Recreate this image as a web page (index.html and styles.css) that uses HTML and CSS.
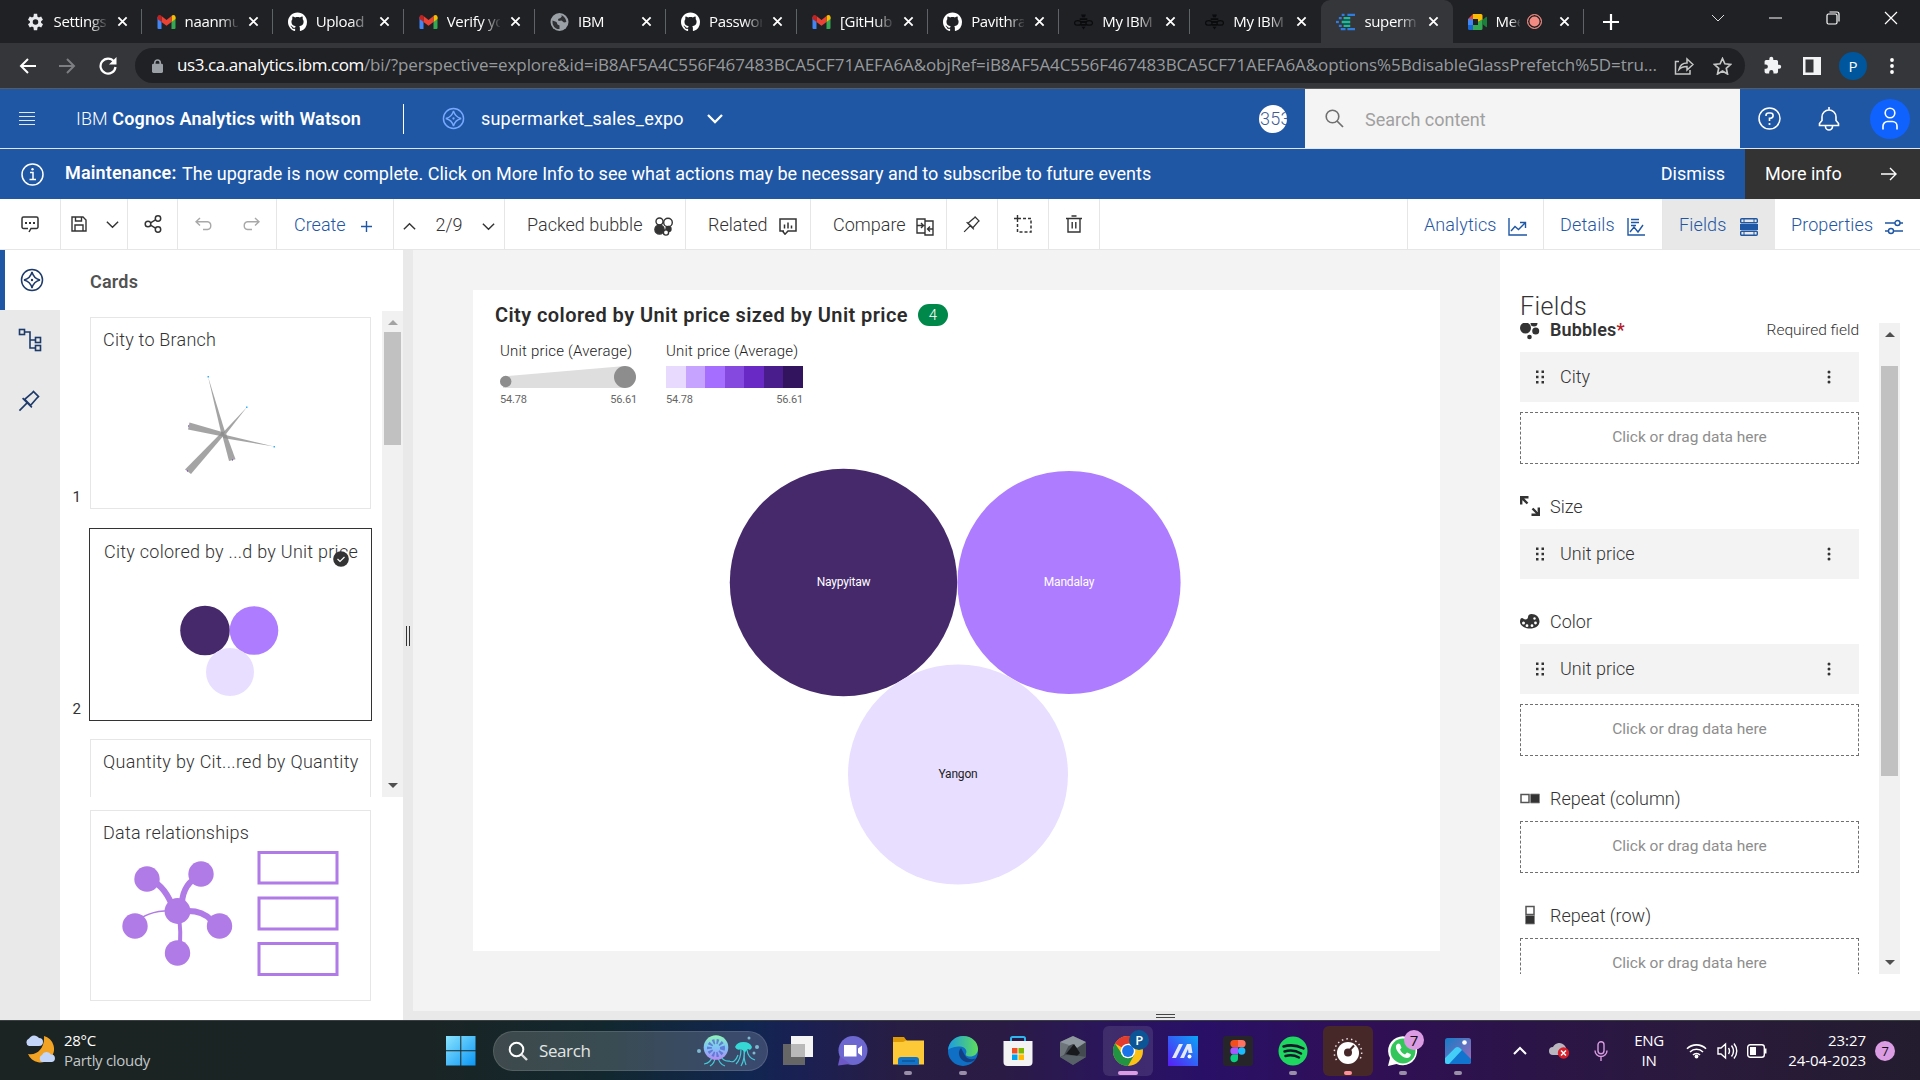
FILE: index.html
```html
<!DOCTYPE html>
<html lang="en">
<head>
<meta charset="utf-8">
<title>supermarket_sales_expo</title>
<link rel="stylesheet" href="styles.css">
</head>
<body>
<svg class="sprite" aria-hidden="true">
  <symbol id="gmail" viewBox="0 0 18 14"><path d="M0 1.800V13a1 1 0 0 0 1 1h3V6.500z" fill="#4285f4"/><path d="M18 1.800V13a1 1 0 0 1-1 1h-3V6.500z" fill="#34a853"/><path d="M14 1v6l4-3V2.200C18 .2 15.600-.7 14 1z" fill="#fbbc04"/><path d="M4 7V1l5 4 5-4v6l-5 3.800z" fill="#ea4335"/><path d="M0 2.200V4l4 3V1C2.400-.7 0 .2 0 2.200z" fill="#c5221f"/></symbol>
  <symbol id="github" viewBox="0 0 16 16"><path fill="#fff" d="M8 0C3.580 0 0 3.580 0 8c0 3.540 2.290 6.530 5.470 7.590.4.070.55-.17.55-.38 0-.19-.01-.82-.01-1.490-2.010.37-2.530-.49-2.690-.94-.09-.23-.48-.94-.82-1.130-.28-.15-.68-.52-.01-.53.63-.01 1.080.58 1.230.82.72 1.210 1.870.87 2.330.66.07-.52.28-.87.51-1.070-1.780-.2-3.640-.89-3.640-3.950 0-.87.31-1.590.82-2.150-.08-.2-.36-1.020.08-2.120 0 0 .67-.21 2.200.82.64-.18 1.320-.27 2-.27s1.360.09 2 .27c1.530-1.040 2.200-.82 2.200-.82.44 1.100.16 1.920.08 2.120.51.56.82 1.270.82 2.150 0 3.070-1.870 3.750-3.650 3.950.29.25.54.73.54 1.480 0 1.070-.01 1.930-.01 2.200 0 .21.15.46.55.38A8.010 8.010 0 0 0 16 8c0-4.420-3.580-8-8-8z"/></symbol>
  <symbol id="bee" viewBox="0 0 20 18"><g fill="none" stroke="#0a0b0c" stroke-width="1.300"><ellipse cx="4" cy="10" rx="3.500" ry="2.400"/><ellipse cx="16" cy="10" rx="3.500" ry="2.400"/></g><path d="M6 5h8v2H6zM7 8h6v2H7zM7 11h6v2H7zM8 14h4l-2 3zM7.500 1h5l-1 3h-3z" fill="#0a0b0c"/></symbol>
  <symbol id="x" viewBox="0 0 12 12"><path d="M1.500 1.500l9 9M10.500 1.500l-9 9" stroke="#fff" stroke-width="2" fill="none"/></symbol>
  <symbol id="compass" viewBox="0 0 24 24"><g fill="none" stroke="currentColor" stroke-width="1.500"><circle cx="12" cy="12" r="10.500"/><path d="M12 4c1 4 4 7 8 8-4 1-7 4-8 8-1-4-4-7-8-8 4-1 7-4 8-8z"/></g><circle cx="12" cy="12" r="1.200" fill="currentColor"/></symbol>
  <symbol id="pin" viewBox="0 0 24 24"><path d="M15.500 2l6.500 6.500M16 2.800L14.800 4 7 10.800 13.200 17 20 9.200l1.200-1.200M4.800 9.500l9.700 9.700M9.500 14.500L1.500 22.500" fill="none" stroke="currentColor" stroke-width="1.700"/></symbol>
  <symbol id="down" viewBox="0 0 16 16"><path d="M2 5l6 6 6-6" fill="none" stroke="currentColor" stroke-width="1.500"/></symbol>
  <symbol id="grip" viewBox="0 0 9 14"><path d="M0 .5h2.500V3H0zM5.500 .5H8V3H5.500zM0 5.800h2.500v2.500H0zM5.500 5.800H8v2.500H5.500zM0 11h2.500v2.500H0zM5.500 11H8v2.500H5.500z" fill="#333"/></symbol>
  <symbol id="kebab" viewBox="0 0 4 14"><circle cx="2" cy="2" r="1.500"/><circle cx="2" cy="7" r="1.500"/><circle cx="2" cy="12" r="1.500"/></symbol>
</svg>

<div class="tabs">
  <div class="tab"><svg width="17" height="18" viewBox="0 0 24 24"><path fill="#e8eaed" d="M19.400 13c.1-.3.100-.7.100-1s0-.7-.1-1l2.500-2-2.400-4.200-3 1.200c-.6-.5-1.200-.8-1.900-1.100L14.200 1H9.800l-.5 3.900c-.7.3-1.300.6-1.900 1.100l-3-1.200L2 9l2.600 2c-.1.3-.1.700-.1 1s0 .7.1 1L2 15l2.400 4.200 3-1.200c.6.500 1.200.8 1.900 1.100l.5 3.900h4.400l.5-3.900c.7-.3 1.300-.6 1.900-1.100l3 1.200L22 15zM12 15.700a3.700 3.700 0 1 1 0-7.400 3.700 3.700 0 0 1 0 7.400z"/></svg><span>Settings</span><svg width="11" height="11"><use href="#x"/></svg></div>
  <div class="tab"><svg width="18" height="14"><use href="#gmail"/></svg><span>naanmu</span><svg width="11" height="11"><use href="#x"/></svg></div>
  <div class="tab"><svg width="20" height="20"><use href="#github"/></svg><span>Upload</span><svg width="11" height="11"><use href="#x"/></svg></div>
  <div class="tab"><svg width="18" height="14"><use href="#gmail"/></svg><span>Verify yo</span><svg width="11" height="11"><use href="#x"/></svg></div>
  <div class="tab"><svg width="18" height="18" viewBox="0 0 18 18"><circle cx="9" cy="9" r="9" fill="#9aa0a6"/><path d="M2 7.500L6 9l1 2.500 2 1v3.500C5 16.500 2 13 2 9zM8 2c2 0 3 .5 3.500 1L10 5 7.500 6 8 8l3-.5 2.500 2 2.300-.5c0-3.500-3-7-6.800-7z" fill="#303134"/></svg><span>IBM</span><svg width="11" height="11"><use href="#x"/></svg></div>
  <div class="tab"><svg width="20" height="20"><use href="#github"/></svg><span>Passwor</span><svg width="11" height="11"><use href="#x"/></svg></div>
  <div class="tab"><svg width="18" height="14"><use href="#gmail"/></svg><span>[GitHub</span><svg width="11" height="11"><use href="#x"/></svg></div>
  <div class="tab"><svg width="20" height="20"><use href="#github"/></svg><span>Pavithra</span><svg width="11" height="11"><use href="#x"/></svg></div>
  <div class="tab"><svg width="20" height="18"><use href="#bee"/></svg><span>My IBM</span><svg width="11" height="11"><use href="#x"/></svg></div>
  <div class="tab before-active"><svg width="20" height="18"><use href="#bee"/></svg><span>My IBM</span><svg width="11" height="11"><use href="#x"/></svg></div>
  <div class="tab active"><svg width="20" height="18" viewBox="0 0 20 18"><path d="M6 1.500h3M12 1.500h8M5 16.500h5M12 16.500h8M3 5h3M3 13h3" stroke="#2f7de1" stroke-width="2.400"/><path d="M8 5h7M6 9h9M8 13h7" stroke="#12c0a0" stroke-width="2.400"/><path d="M0 9h3" stroke="#2f7de1" stroke-width="2.400"/></svg><span>superm</span><svg width="11" height="11"><use href="#x"/></svg></div>
  <div class="tab"><svg width="19" height="16" viewBox="0 0 19 16"><path d="M0 5l5-5v5z" fill="#ea4335"/><path d="M5 0h8a1.500 1.500 0 0 1 1.500 1.500V6L10 8V5H5z" fill="#fbbc04"/><path d="M0 5h5v6H0z" fill="#4285f4"/><path d="M0 11h5v5H1.500A1.500 1.500 0 0 1 0 14.500z" fill="#1967d2"/><path d="M5 11h5V8l4.500-3v9.500A1.500 1.500 0 0 1 13 16H5z" fill="#34a853"/><path d="M14.500 6L18 3c.6-.4 1 0 1 .5v9c0 .5-.5.9-1 .5l-3.500-3z" fill="#188038"/></svg><span class="short">Mee</span><i class="rec"></i><svg width="11" height="11"><use href="#x"/></svg></div>
  <svg class="newtab" width="16" height="16" viewBox="0 0 16 16"><path d="M8 0v16M0 8h16" stroke="#fff" stroke-width="2.200"/></svg>
  <div class="winctl">
    <svg width="14" height="8" viewBox="0 0 14 8"><path d="M1 1l6 6 6-6" fill="none" stroke="#ddd"/></svg>
    <svg width="13" height="2" viewBox="0 0 13 2"><path d="M0 1h13" stroke="#fff"/></svg>
    <svg width="14" height="14" viewBox="0 0 14 14"><g fill="none" stroke="#fff" stroke-width="1.200"><rect x="1" y="3" width="10" height="10" rx="1.500"/><path d="M3.500 1H11a2 2 0 0 1 2 2v7.500"/></g></svg>
    <svg width="14" height="14" viewBox="0 0 14 14"><path d="M1 1l12 12M13 1L1 13" stroke="#fff" stroke-width="1.200"/></svg>
  </div>
</div>

<div class="navbar">
  <svg class="nav" width="17" height="16" viewBox="0 0 17 16"><path d="M17 8H2M9 1L2 8l7 7" fill="none" stroke="#fff" stroke-width="2"/></svg>
  <svg class="nav" width="17" height="16" viewBox="0 0 17 16"><path d="M0 8h15M8 1l7 7-7 7" fill="none" stroke="#7d7e81" stroke-width="2"/></svg>
  <svg class="nav" width="18" height="18" viewBox="0 0 18 18"><path d="M15 4.500A7.500 7.500 0 1 0 16.500 10" fill="none" stroke="#fff" stroke-width="2.200"/><path d="M17.500 0v7.500H10z" fill="#fff"/></svg>
  <div class="omnibox">
    <svg width="11" height="14" viewBox="0 0 12 15"><rect y="5" width="12" height="10" rx="1.500" fill="#9aa0a6"/><path d="M3 6V4a3 3 0 0 1 6 0v2" fill="none" stroke="#9aa0a6" stroke-width="1.800"/></svg>
    <p class="url"><b>us3.ca.analytics.ibm.com</b>/bi/?perspective=explore&amp;id=iB8AF5A4C556F467483BCA5CF71AEFA6A&amp;objRef=iB8AF5A4C556F467483BCA5CF71AEFA6A&amp;options%5BdisableGlassPrefetch%5D=tru…</p>
    <svg width="20" height="18" viewBox="0 0 20 18"><path d="M5 4.500H1.500V17H16v-4M5 12.500C6 8 9 6 13 6V2l6 5.500-6 5.500V9.500c-4 0-6 .8-8 3z" fill="none" stroke="#c4c7c5" stroke-width="1.500"/></svg>
    <svg class="star" width="19" height="18" viewBox="0 0 19 18"><path d="M9.500 1.500l2.400 5.300 5.700.6-4.300 3.900 1.200 5.700-5-3-5 3 1.200-5.700L1.400 7.400l5.700-.6z" fill="none" stroke="#c4c7c5" stroke-width="1.700"/></svg>
  </div>
  <svg class="puzzle" width="19" height="19" viewBox="0 0 24 24"><path fill="#f1f3f4" d="M20.500 11H19V7a2 2 0 0 0-2-2h-4V3.500a2.500 2.500 0 0 0-5 0V5H4a2 2 0 0 0-2 2v3.800h1.500a2.700 2.700 0 0 1 0 5.400H2V20c0 1.100.9 2 2 2h3.800v-1.500a2.700 2.700 0 0 1 5.400 0V22H17a2 2 0 0 0 2-2v-4h1.500a2.500 2.500 0 0 0 0-5z"/></svg>
  <svg class="side" width="18" height="18" viewBox="0 0 18 18"><path fill="#f1f3f4" fill-rule="evenodd" d="M0 0h18v18H0zM2.500 2.500v13h8v-13z"/></svg>
  <span class="profile">P</span>
  <svg class="dots" width="4" height="16" viewBox="0 0 4 16"><g fill="#fff"><circle cx="2" cy="2" r="1.900"/><circle cx="2" cy="8" r="1.900"/><circle cx="2" cy="14" r="1.900"/></g></svg>
</div>

<header class="appbar">
  <svg class="burger" width="16" height="14" viewBox="0 0 16 14"><path d="M0 .5h16M0 4.500h16M0 8.500h16M0 12.500h16" stroke="#dfe8f5" stroke-width="1"/></svg>
  <div class="brand">IBM <b>Cognos Analytics with Watson</b></div>
  <i class="rule"></i>
  <svg class="doc" width="23" height="23"><use href="#compass"/></svg>
  <span class="docname">supermarket_sales_expo</span>
  <svg class="docdown" width="18" height="12" viewBox="0 0 18 12"><path d="M2 2l7 7 7-7" fill="none" stroke="#fff" stroke-width="2.300"/></svg>
  <span class="count">353</span>
  <div class="search"><svg width="19" height="19" viewBox="0 0 19 19"><circle cx="7.500" cy="7.500" r="6.300" fill="none" stroke="#6f6f6f" stroke-width="1.600"/><path d="M12 12l6 6" stroke="#6f6f6f" stroke-width="1.700"/></svg><span>Search content</span></div>
  <div class="userbar">
    <svg width="23" height="23" viewBox="0 0 23 23"><circle cx="11.500" cy="11.500" r="10.500" fill="none" stroke="#fff" stroke-width="1.500"/><path d="M8 9V8.500A2.500 2.500 0 0 1 10.500 6h2a2.600 2.600 0 0 1 0 5.200h-1V14" fill="none" stroke="#fff" stroke-width="1.600"/><circle cx="11.500" cy="17" r="1.100" fill="#fff"/></svg>
    <svg width="22" height="24" viewBox="0 0 22 24"><path d="M11 0v3M1.500 18.500v-2L4 13.500V10a7 7 0 0 1 14 0v3.500l2.500 3v2zM7.500 19v.5a3.500 3.500 0 0 0 7 0V19" fill="none" stroke="#fff" stroke-width="1.600"/></svg>
    <span class="avatar"><svg width="18" height="23" viewBox="0 0 18 23"><circle cx="9" cy="6" r="4.800" fill="none" stroke="#fff" stroke-width="1.600"/><path d="M2 22.500V19a4.500 4.500 0 0 1 4.500-4.500h5A4.500 4.500 0 0 1 16 19v3.500" fill="none" stroke="#fff" stroke-width="1.600"/></svg></span>
  </div>
</header>

<div class="banner">
  <svg width="23" height="23" viewBox="0 0 23 23"><circle cx="11.500" cy="11.500" r="10.500" fill="none" stroke="#fff" stroke-width="1.500"/><path d="M9 9.500h3V16M8.500 16.500h6.500" fill="none" stroke="#fff" stroke-width="1.500"/><circle cx="11.500" cy="6.200" r="1.200" fill="#fff"/></svg>
  <b>Maintenance:</b><span class="msg">The upgrade is now complete. Click on More Info to see what actions may be necessary and to subscribe to future events</span>
  <span class="dismiss">Dismiss</span>
  <div class="more">More info<svg width="16" height="14" viewBox="0 0 16 14"><path d="M0 7h14.500M9 1l6 6-6 6" fill="none" stroke="#fff" stroke-width="1.400"/></svg></div>
</div>

<div class="toolbar">
  <div class="cell w60"><svg width="18" height="17" viewBox="0 0 18 17"><g fill="none" stroke="#333" stroke-width="1.500"><path d="M8 16l2-3.500h5.500A1.500 1.500 0 0 0 17 11V2.500A1.500 1.500 0 0 0 15.500 1h-13A1.500 1.500 0 0 0 1 2.500V11a1.500 1.500 0 0 0 1.500 1.500H7"/></g><path d="M4 6h2v2H4zM8 6h2v2H8zM12 6h2v2h-2z" fill="#333"/></svg></div>
  <div class="cell save"><svg width="16" height="16" viewBox="0 0 16 16"><g fill="none" stroke="#333" stroke-width="1.400"><path d="M1 1h11l3 3v11H1zM4.500 1v4h6V1M4 15V9h8v6"/></g></svg><svg width="15" height="15"><use href="#down"/></svg></div>
  <div class="cell w50"><svg width="18" height="18" viewBox="0 0 18 18"><g fill="none" stroke="#333" stroke-width="1.500"><circle cx="4" cy="9" r="2.800"/><circle cx="14" cy="3.500" r="2.700"/><circle cx="14" cy="14.500" r="2.700"/><path d="M6.500 7.800l5-3M6.500 10.200l5 3"/></g></svg></div>
  <div class="cell undo"><svg width="17" height="14" viewBox="0 0 17 14"><path d="M5 1L1 4.800l4 3.800M1 4.800h11.500a3.900 3.900 0 0 1 0 7.700H8" fill="none" stroke="#a8a8a8" stroke-width="1.400"/></svg><svg width="17" height="14" viewBox="0 0 17 14"><path d="M12 1l4 3.800-4 3.800M16 4.800H4.500a3.900 3.900 0 0 0 0 7.700H9" fill="none" stroke="#a8a8a8" stroke-width="1.400"/></svg></div>
  <div class="cell create blue"><span>Create</span><svg width="11" height="11" viewBox="0 0 11 11"><path d="M5.500 0v11M0 5.500h11" stroke="currentColor" stroke-width="1.400"/></svg></div>
  <div class="cell pager"><svg class="up" width="15" height="15"><use href="#down"/></svg><span>2/9</span><svg width="15" height="15"><use href="#down"/></svg></div>
  <div class="cell packed"><span>Packed bubble</span><svg width="19" height="19" viewBox="0 0 19 19"><g stroke="#333" stroke-width="1.400" fill="#fff"><circle cx="14" cy="5.500" r="4.300"/><circle cx="5.500" cy="4.500" r="3.500"/><circle cx="5.500" cy="12.500" r="4.600" fill="#333"/><circle cx="14.500" cy="12" r="2.500" fill="#333"/><circle cx="12" cy="15.500" r="2.600"/></g></svg></div>
  <div class="cell related"><span>Related</span><svg width="18" height="17" viewBox="0 0 18 17"><path d="M5 13H1V1h16v12H9l-3 3.200L3.500 13M5.500 10.500v-4M9 10.500v-6M12.500 10.500v-3" fill="none" stroke="#333" stroke-width="1.500"/></svg></div>
  <div class="cell compare"><span>Compare</span><svg width="18" height="18" viewBox="0 0 18 18"><path d="M9 3V1H1v14h8M9 3h8v14H9zM1 7.500h6M5 5l2.500 2.500L5 10M17 11h-5.500M14 8.500L11.500 11l2.500 2.500" fill="none" stroke="#333" stroke-width="1.400"/></svg></div>
  <div class="cell w51"><svg width="18" height="18" color="#333"><use href="#pin"/></svg></div>
  <div class="cell w51"><svg width="18" height="18" viewBox="0 0 18 18"><path d="M3.500 0v7M0 3.500h7" stroke="#333" stroke-width="1.400"/><path d="M9 3.500h8V17H3.500V9" fill="none" stroke="#333" stroke-width="1.500" stroke-dasharray="3 2"/></svg></div>
  <div class="cell w51"><svg width="16" height="18" viewBox="0 0 16 18"><path d="M0 3.500h16M2 4v13h12V4M5.500 1h5M6.200 7v6.500M9.800 7v6.500" fill="none" stroke="#333" stroke-width="1.400"/></svg></div>
  <div class="right">
    <div class="cell analytics blue"><span>Analytics</span><svg width="19" height="18" viewBox="0 0 19 18"><path d="M1 0v17h18M3 13l4-4.500 3.500 3L17 5M12 4.500h5.500V10" fill="none" stroke="currentColor" stroke-width="1.400"/></svg></div>
    <div class="cell details blue"><span>Details</span><svg width="18" height="18" viewBox="0 0 18 18"><path d="M1 0v17h17M4 1.500h8M4 4.500h8M4 7.500h5M3 14l4-5 4 5 5-7" fill="none" stroke="currentColor" stroke-width="1.400"/></svg></div>
    <div class="cell fields blue"><span>Fields</span><svg width="18" height="18" viewBox="0 0 18 18"><path d="M0 6h18v6H0z" fill="currentColor"/><rect x=".7" y=".7" width="16.600" height="4" rx="1" fill="none" stroke="currentColor" stroke-width="1.400"/><rect x=".7" y="13.300" width="16.600" height="4" rx="1" fill="none" stroke="currentColor" stroke-width="1.400"/><path d="M4 1v4M14 1v4M4 13v4M14 13v4" stroke="currentColor"/></svg></div>
    <div class="cell props blue"><span>Properties</span><svg width="18" height="16" viewBox="0 0 18 16"><g fill="none" stroke="currentColor" stroke-width="1.400"><circle cx="12.500" cy="4" r="2.500"/><circle cx="6" cy="12" r="2.500"/><path d="M0 4h10M15 4h3M0 12h3.500M8.500 12H18"/></g></svg></div>
  </div>
</div>

<main class="work">
  <nav class="rail">
    <div class="on"><svg width="24" height="24"><use href="#compass"/></svg></div>
    <div><svg width="24" height="24" viewBox="0 0 24 24"><g fill="none" stroke="currentColor" stroke-width="1.600"><rect x="1.500" y="1.500" width="5" height="5"/><rect x="17.500" y="9.500" width="5" height="5"/><rect x="17.500" y="17.500" width="5" height="5"/><path d="M6.500 4h5.500v16h5.500M12 12h5.500"/></g></svg></div>
    <div><svg width="23" height="23"><use href="#pin"/></svg></div>
  </nav>
  <section class="cards">
    <h2>Cards</h2>
    <div class="cardlist">
      <div class="scroller">
        <div class="row"><span class="no">1</span>
          <div class="card"><p>City to Branch</p>
            <svg width="281" height="192" viewBox="90 317.500 281 192"><g fill="#8d8d8d" fill-opacity=".8"><path d="M208 377l17.500 57-4 1z"/><path d="M247 407.500l-21 27-2.500-2z"/><path d="M274 447l-51-8.500.5-3.500z"/><path d="M189.500 423l-1.500 7 35 7 1-4z"/><path d="M185 470l6 4.500 34-40-2.500-2.500z"/><path d="M229 461.500l6.500-1.700-9.500-26-4 1z"/></g><path d="M207.500 376.500h1.500v1.500h-1.500zM246 407h1.500v1.500H246zM273.500 446.500h1.500v1.500h-1.500z" fill="#33b1ff"/><path d="M188 426h1v1h-1zM187 471h1v1h-1zM232 460h1v1h-1z" fill="#6929c4"/></svg>
          </div></div>
        <div class="row"><span class="no">2</span>
          <div class="card selected"><p>City colored by ...d by Unit price</p>
            <svg width="281" height="192" viewBox="89 528 281 192"><circle cx="205" cy="630.500" r="24.800" fill="#46296b"/><circle cx="254" cy="630.500" r="24.300" fill="#ae7cff"/><circle cx="230" cy="672" r="24" fill="#e8deff"/></svg>
            <svg class="tick" width="16" height="16" viewBox="0 0 16 16"><circle cx="8" cy="8" r="7.800" fill="#333"/><path d="M4.500 8l2.500 2.500 4.500-4.500" fill="none" stroke="#fff" stroke-width="1.200"/></svg>
          </div></div>
        <div class="row"><span class="no"></span><div class="card"><p class="q">Quantity by Cit...red by Quantity</p></div></div>
      </div>
      <div class="vbar left"><i class="arr up dim"></i><i class="thumb"></i><i class="arr dn"></i></div>
    </div>
    <div class="card rel"><p>Data relationships</p>
      <svg width="281" height="191" viewBox="90 810 281 191"><g fill="none" stroke="#b07be6"><path d="M147 879q16 4 25 26" stroke-width="6"/><path d="M201 875q-18 8-19 28" stroke-width="6"/><path d="M178 912q22-4 33 8l8 6" stroke-width="6"/><path d="M135 924q12-15 42-13" stroke-width="1.500"/><path d="M178 911q4 21 1 42" stroke-width="4"/></g><g fill="#b07be6"><circle cx="147" cy="879" r="12.700"/><circle cx="201" cy="874" r="12.700"/><circle cx="177.500" cy="911" r="12.900"/><circle cx="135" cy="926" r="12.700"/><circle cx="219.500" cy="926" r="12.700"/><circle cx="177.500" cy="953" r="12.700"/></g><g fill="none" stroke="#b07be6" stroke-width="3"><path d="M259 852.500h78v30.500h-78zM259 898h78v31h-78zM259 943.500h78v31h-78z"/></g></svg>
    </div>
  </section>
  <div class="splitter"><i></i></div>
  <div class="center">
    <div class="canvas">
      <article class="viz">
        <h1>City colored by Unit price sized by Unit price <em>4</em></h1>
        <div class="legends">
          <div class="legend"><span>Unit price (Average)</span><svg width="137" height="22" viewBox="0 0 137 22"><path d="M3 10.500L125 0v22H3z" fill="#dedede"/><circle cx="5.700" cy="15.500" r="5.700" fill="#8d8d8d"/><circle cx="125" cy="11" r="11" fill="#8d8d8d"/></svg><div class="ends"><span>54.78</span><span>56.61</span></div></div>
          <div class="legend"><span>Unit price (Average)</span><div class="ramp"><i class="c1"></i><i class="c2"></i><i class="c3"></i><i class="c4"></i><i class="c5"></i><i class="c6"></i><i class="c7"></i></div><div class="ends"><span>54.78</span><span>56.61</span></div></div>
        </div>
        <svg class="bubbles" width="967" height="540" viewBox="473 410 967 540"><circle cx="843.500" cy="582.500" r="113.700" fill="#46296b"/><circle cx="1069" cy="582.500" r="111.600" fill="#ae7cff"/><circle cx="958" cy="774.500" r="110" fill="#e8deff"/><g class="lab"><text x="843.500" y="586">Naypyitaw</text><text x="1069" y="586">Mandalay</text><text x="958" y="778" class="dark">Yangon</text></g></svg>
      </article>
    </div>
    <aside class="panel">
      <h2>Fields</h2>
      <div class="panelbody">
        <div class="slots">
          <div class="head first"><svg width="20" height="17" viewBox="0 0 20 17"><g fill="#333"><circle cx="5.500" cy="5" r="5.500"/><circle cx="14" cy="0" r="3.500"/><circle cx="15.700" cy="8" r="3.500"/><circle cx="9.500" cy="14" r="2.300"/></g></svg><b>Bubbles<u>*</u></b><small>Required field</small></div>
          <div class="item"><svg width="9" height="14"><use href="#grip"/></svg><span>City</span><svg class="k" width="4" height="14"><use href="#kebab"/></svg></div>
          <div class="drop">Click or drag data here</div>
          <div class="head"><svg width="20" height="20" viewBox="0 0 20 20"><path d="M1.200 8.500V1.200h7.300M1.500 1.500l6 6M18.800 11.500v7.300h-7.300M18.500 18.500l-6-6" fill="none" stroke="#333" stroke-width="2.400"/></svg><span>Size</span></div>
          <div class="item"><svg width="9" height="14"><use href="#grip"/></svg><span>Unit price</span><svg class="k" width="4" height="14"><use href="#kebab"/></svg></div>
          <div class="head"><svg width="20" height="15" viewBox="0 0 20 15"><path fill="#333" fill-rule="evenodd" d="M8 3C8 1 9.500 0 11.500 0 16 0 19.500 3 19.500 7.500S15 14.500 10 14.500 0 12 0 7.500C0 5 1 4 2 4s2 1.500 3.500 1.500S8 4.500 8 3z"/><g fill="#fff"><circle cx="3.500" cy="9" r="1.500"/><circle cx="7" cy="11.700" r="1.400"/><circle cx="12" cy="11.700" r="1.400"/><circle cx="15.500" cy="9" r="1.400"/><circle cx="14.500" cy="4.500" r="1.200"/></g></svg><span>Color</span></div>
          <div class="item"><svg width="9" height="14"><use href="#grip"/></svg><span>Unit price</span><svg class="k" width="4" height="14"><use href="#kebab"/></svg></div>
          <div class="drop">Click or drag data here</div>
          <div class="head"><svg width="20" height="13" viewBox="0 0 20 13"><path d="M1 2.500h8v8H1z" fill="#fff" stroke="#555" stroke-width="1.500"/><path d="M10.500 2h9v9h-9z" fill="#333" stroke="#888" stroke-width=".8"/></svg><span>Repeat (column)</span></div>
          <div class="drop">Click or drag data here</div>
          <div class="head"><svg width="20" height="20" viewBox="0 0 20 20"><path d="M6 1.500h8v8H6z" fill="#fff" stroke="#555" stroke-width="1.500"/><path d="M5.500 10.500h9v8.500h-9z" fill="#333" stroke="#888" stroke-width=".8"/></svg><span>Repeat (row)</span></div>
          <div class="drop">Click or drag data here</div>
        </div>
        <div class="vbar rightbar"><i class="arr up"></i><i class="thumb"></i><i class="arr dn"></i></div>
      </div>
    </aside>
    <div class="bottomsplit"><i></i></div>
  </div>
</main>

<footer class="taskbar">
  <div class="weather">
    <svg width="31" height="30" viewBox="0 0 31 30"><path d="M19 2a13.500 13.500 0 1 1-16 18C12 22 20 14 19 2z" fill="#f3a324"/><path d="M4 12a4 4 0 0 1 0-7.500A6 6 0 0 1 14 4a4 4 0 0 1 0 8z" fill="#c3d5f8"/><path d="M17 28a3.800 3.800 0 0 1 0-7A5 5 0 0 1 26 20.500a3.800 3.800 0 0 1 1 7.500z" fill="#c3d5f8"/></svg>
    <div>28°C<br><span>Partly cloudy</span></div>
  </div>
  <div class="apps">
    <svg class="win" width="30" height="30" viewBox="0 0 30 30"><defs><linearGradient id="gw" x1="0" y1="0" x2="1" y2="1"><stop offset="0" stop-color="#8be4fd"/><stop offset="1" stop-color="#0a96f5"/></linearGradient></defs><path d="M0 0h14.300v14.300H0zM15.300 0H29.500v14.300H15.300zM0 15.300h14.300V29.500H0zM15.300 15.300H29.500V29.500H15.300z" fill="url(#gw)"/></svg>
    <div class="tsearch"><svg width="20" height="20" viewBox="0 0 20 20"><circle cx="8.500" cy="8.500" r="6.800" fill="none" stroke="#fff" stroke-width="2"/><path d="M13.500 13.500L19 19" stroke="#ddd" stroke-width="2.400"/></svg><span>Search</span>
      <svg class="jelly" width="64" height="32" viewBox="0 0 64 32"><defs><linearGradient id="gj" x1="0" y1="0" x2="0" y2="1"><stop offset="0" stop-color="#8ff5b5"/><stop offset=".5" stop-color="#7fc4f5"/><stop offset="1" stop-color="#b48cf2"/></linearGradient></defs><g fill="none" stroke="#45c9d6" stroke-width="1.200"><path d="M16 20q-2 8-9 9M18 22q0 6-5 9M21 22q1 7 7 9M23 20q3 7 10 6M44 14q0 10-5 15M47 15q1 9-3 16M50 15q1 8 8 10M48 15q-2 8 1 15M32 26q6 3 9-6"/></g><circle cx="19" cy="12.500" r="12.300" fill="url(#gj)"/><circle cx="19" cy="13" r="6.500" fill="none" stroke="#5168cf" stroke-width="5" stroke-dasharray="2 1.800" opacity=".75"/><path d="M38 12a9 7.500 0 0 1 17 0q-1 4-4 2l-3 3-4-3q-4 2-6-2z" fill="#35d8d5"/><g fill="#7fb9cf"><circle cx="2" cy="16" r="2"/><circle cx="52" cy="3" r="1.500"/><circle cx="60" cy="12" r="2"/><circle cx="57" cy="18" r="1.500"/></g></svg>
    </div>
    <div class="app"><svg width="30" height="30" viewBox="0 0 30 30"><path d="M0 8h22v21H0z" fill="#666"/><path d="M8 0h22v21H8z" fill="#f4f4f4"/><path d="M8 8h14v13H8z" fill="#b9b9b9"/></svg></div>
    <div class="app"><svg width="30" height="30" viewBox="0 0 30 30"><circle cx="15" cy="14.500" r="14.500" fill="#6d68cf"/><path d="M2 20L0 29.500l12-1.500z" fill="#6d58c8"/><path d="M6 9h12.500v11.500H6zM20 12.500l4-3v10.500l-4-3z" fill="#fff"/></svg></div>
    <div class="app run"><svg width="31" height="28" viewBox="0 0 31 28"><path d="M0 0h11l3 4v6H0z" fill="#dd9a06"/><path d="M0 5h10l3-1.500h18V27.500H0z" fill="#fdc936"/><path d="M5 28v-5a3 3 0 0 1 3-3h15a3 3 0 0 1 3 3v5z" fill="#1274c9"/><path d="M9 24h13" stroke="#0b4f90" stroke-width="1.200"/></svg></div>
    <div class="app run"><svg width="30" height="30" viewBox="0 0 30 30"><defs><linearGradient id="ge" x1="0" x2="1"><stop offset="0" stop-color="#1b9de2"/><stop offset="1" stop-color="#5fdc5a"/></linearGradient></defs><circle cx="15" cy="15" r="15" fill="#0e6fc4"/><path d="M0 14C1 5 8 0 15 0c9 0 15 6 15 13 0 5-4 7.500-8 7.500-3 0-5-1-4-3 1.500-3-1-7-6-7S2 12 0 14z" fill="url(#ge)"/><path d="M13 12c-4 4-2 12 5 14 4 1 8-1 9.500-3.500-4 1.500-9 .5-10.500-3z" fill="#123f83"/></svg></div>
    <div class="app"><svg width="30" height="30" viewBox="0 0 30 30"><path d="M8 6V2.500A1.500 1.500 0 0 1 9.500 1h11A1.500 1.500 0 0 1 22 2.500V6" fill="none" stroke="#2fb5ee" stroke-width="2"/><path d="M.5 5h29v21a4 4 0 0 1-4 4h-21a4 4 0 0 1-4-4z" fill="#f3f3f3"/><path d="M9 12h5.500v5.500H9z" fill="#f25022"/><path d="M15.500 12H21v5.500h-5.500z" fill="#7fba00"/><path d="M9 18.500h5.500V24H9z" fill="#00a4ef"/><path d="M15.500 18.500H21V24h-5.500z" fill="#ffb900"/></svg></div>
    <div class="app"><svg width="28" height="29" viewBox="0 0 28 29"><path d="M14 0l13 6v15l-13 8L1 21V6z" fill="#434a50"/><path d="M14 0l13 6-9 6-4-4-7 3L1 6z" fill="#8f989e"/><path d="M1 21V6l9 3-5 10z" fill="#6d757b"/><path d="M15 8l6 9-3 3-11-2z" fill="#17191c"/><path d="M1 21l6-2 14 1 6 1-13 8z" fill="#596168"/></svg></div>
    <div class="app chrome run"><svg width="30" height="30" viewBox="0 0 30 30"><circle cx="15" cy="15" r="15" fill="#fbc116"/><path d="M15 15L2 7.500A15 15 0 0 1 28 7.500H15z" fill="#e33b2e"/><path d="M2 7.500A15 15 0 0 0 15 30l6.500-11.500L9 18z" fill="#229342"/><circle cx="15" cy="15" r="7.300" fill="#fff"/><circle cx="15" cy="15" r="5.900" fill="#1a73e8"/></svg><b class="pb">P</b></div>
    <div class="app"><svg width="30" height="30" viewBox="0 0 30 30"><defs><linearGradient id="gm" x1="0" y1="1" x2="1" y2="0"><stop offset="0" stop-color="#5a1cf5"/><stop offset="1" stop-color="#0aa5f7"/></linearGradient></defs><path d="M0 0h30v30H0z" fill="url(#gm)"/><path d="M4 22L11 8h4L8 22zM12 22l7-14h4l1.500 9h-4L20 13l-4 9z" fill="#e5e9ff"/><circle cx="21.500" cy="20.500" r="2" fill="#fff"/></svg></div>
    <div class="app"><svg width="30" height="30" viewBox="0 0 30 30"><rect width="30" height="30" rx="3" fill="#26262a"/><path d="M11 4h4v7.300h-4a3.650 3.650 0 0 1 0-7.300z" fill="#f24e1e"/><path d="M15 4h4a3.650 3.650 0 0 1 0 7.300h-4z" fill="#ff7262"/><path d="M11 11.300h4v7.300h-4a3.650 3.650 0 0 1 0-7.300z" fill="#a259ff"/><circle cx="18.700" cy="15" r="3.700" fill="#1abcfe"/><path d="M11 18.600h4v3.700a3.800 3.800 0 1 1-4-3.700z" fill="#0acf83"/></svg></div>
    <div class="app run"><svg width="30" height="30" viewBox="0 0 30 30"><circle cx="15" cy="15" r="14.500" fill="#1ed760"/><path d="M5.500 10.500q10-3 20 2M6.500 15.500q9-2.500 16.500 2M7.500 20q7-2 13.500 1.500" fill="none" stroke="#15172a" stroke-width="2.500" stroke-linecap="round"/></svg></div>
    <div class="app groove run"><svg width="32" height="30" viewBox="0 0 32 30"><circle cx="16" cy="17" r="11" fill="#fff"/><circle cx="16" cy="16.500" r="4" fill="#472829"/><path d="M16 16l6-6.500" stroke="#472829" stroke-width="2"/><path d="M4.500 24A13.700 13.700 0 1 1 27.500 24" fill="none" stroke="#e6dede" stroke-width="1.500" stroke-dasharray="1.500 3.100"/></svg></div>
    <div class="app run"><svg width="30" height="30" viewBox="0 0 30 30"><path d="M0 30l2-8A14.500 14.500 0 1 1 8.500 28z" fill="#fff"/><circle cx="15" cy="15" r="12.500" fill="#35c65b"/><path d="M10 7.500c-3 1.500-2.500 5 0 8.500 3 4 7.500 7 11 5.500 2-1 2-3 1.500-3.500L19 16.500l-2 2c-2-.8-4-2.500-5-5l1.500-1.800L12 8z" fill="#fff"/></svg><b class="wb">7</b></div>
    <div class="app run"><svg width="26" height="26" viewBox="0 0 26 26"><defs><linearGradient id="gp" x1="0" y1="0" x2="1" y2="1"><stop offset="0" stop-color="#137cc7"/><stop offset="1" stop-color="#a56ab8"/></linearGradient></defs><rect width="26" height="26" rx="2.500" fill="url(#gp)"/><circle cx="19.500" cy="4.500" r="2.300" fill="#fff"/><path d="M0 20l10-10q2.500-2 5 0l11 11v2.500a2.500 2.500 0 0 1-2.500 2.500h-21A2.500 2.500 0 0 1 0 23.500z" fill="#1175cf"/><path d="M0 20l10-10q2.500-2 5 0l2 2L4 26H2.500A2.500 2.500 0 0 1 0 23.500z" fill="#43cdf7"/></svg></div>
  </div>
  <div class="tray">
    <svg class="t1" width="14" height="9" viewBox="0 0 14 9"><path d="M1 8l6-6 6 6" fill="none" stroke="#fff" stroke-width="2"/></svg>
    <svg class="t2" width="21" height="17" viewBox="0 0 21 17"><path d="M4 13a4 4 0 0 1 0-8A7 7 0 0 1 16 4q3 4 0 9z" fill="#b9b6bf"/><circle cx="14.500" cy="11" r="5.700" fill="#d81f2a"/><path d="M12 8.500l5 5M17 8.500l-5 5" stroke="#fff" stroke-width="1.500"/></svg>
    <svg class="t3" width="14" height="20" viewBox="0 0 14 20"><g fill="none" stroke="#d99be0" stroke-width="1.400"><rect x="4" y=".8" width="6" height="12" rx="3"/><path d="M1 9.500a6 6 0 0 0 12 0M7 16v4"/></g></svg>
    <div class="lang">ENG<br>IN</div>
    <svg class="t4" width="21" height="16" viewBox="0 0 21 16"><g fill="none" stroke="#fff" stroke-width="1.600"><path d="M1 5.800a13.500 13.500 0 0 1 19 0M4 9a9.200 9.200 0 0 1 13 0M7 12a5 5 0 0 1 7 0"/></g><circle cx="10.500" cy="13.500" r="1.900" fill="#fff"/></svg>
    <svg class="t5" width="21" height="18" viewBox="0 0 21 18"><path d="M1 6v6h3l4.500 4V2L4 6zM11.500 6q2 3 0 6M14.500 3.500q4 5.500 0 11M17 1.500q5.500 7.500 0 15" fill="none" stroke="#fff" stroke-width="1.400"/></svg>
    <svg class="t6" width="20" height="14" viewBox="0 0 20 14"><rect x=".7" y=".7" width="16.600" height="12.600" rx="2.500" fill="none" stroke="#fff" stroke-width="1.400"/><path d="M3 3h6v8H3zM17.500 4.500h2v5h-2z" fill="#fff"/></svg>
    <div class="clock">23:27<br>24-04-2023</div>
    <b class="notif">7</b>
  </div>
</footer>
</body>
</html>
```
FILE: styles.css
```css
* { box-sizing: border-box; margin: 0; padding: 0; }
body { width: 1920px; height: 1080px; overflow: hidden; background: #fff; font: 18px/24px Roboto, "Liberation Sans", sans-serif; color: #333; }
svg { flex: none; display: block; }
i { display: block; font-style: normal; }
.sprite { position: absolute; width: 0; height: 0; }

/* browser tabs */
.tabs { display: flex; align-items: center; height: 43px; background: #202124; padding-left: 10.500px; font: 15px/20px "Open Sans", sans-serif; letter-spacing: -.35px; color: #fff; }
.tab { position: relative; display: flex; align-items: center; width: 131.100px; height: 43px; padding: 0 14px 0 16px; }
.tab::after { content: ""; position: absolute; right: 0; top: 9px; width: 1px; height: 25px; background: #5f6368; }
.tab.active::after, .tab.before-active::after { display: none; }
.tab > svg:first-child { width: 19px; margin: 0 9px 0 -1px; }
.tab span { width: 53px; margin-top: -1px; white-space: nowrap; -webkit-mask-image: linear-gradient(90deg, #000 35px, transparent 55px); mask-image: linear-gradient(90deg, #000 35px, transparent 55px); }
.tab span.short { width: 24px; -webkit-mask-image: linear-gradient(90deg, #000 14px, transparent 25px); mask-image: linear-gradient(90deg, #000 14px, transparent 25px); }
.tab svg:last-child { margin-left: auto; }
.tab.active { background: #35363a; border-radius: 9px 9px 0 0; }
.rec { width: 15px; height: 15px; margin-left: 7px; border-radius: 50%; background: #f28b82; border: 1.500px solid #f28b82; box-shadow: inset 0 0 0 1.500px #202124; }
.newtab { margin-left: 19px; }
.winctl { display: flex; align-items: center; margin: 0 22px 7px auto; }
.winctl svg + svg { margin-left: 44px; }

.navbar { display: flex; align-items: center; height: 46px; background: #35363a; border-bottom: 1px solid #5a5b5e; padding-left: 19px; }
.nav { margin-right: 23px; }
.nav:nth-child(3) { margin-right: 18px; }
.omnibox { display: flex; align-items: center; width: 1610px; height: 35px; border-radius: 18px; background: #202124; padding: 0 13px 0 17px; }
.url { flex: 1; margin: -1px 0 0 14px; font: 17px/24px "Open Sans", sans-serif; letter-spacing: -.09px; white-space: nowrap; color: #969a9f; }
.url b { font-weight: 400; letter-spacing: -.42px; color: #fff; }
.star { margin-left: 19px; }
.puzzle { margin-left: 18px; }
.side { margin-left: 21px; }
.profile { width: 28px; height: 28px; margin-left: 18px; border-radius: 50%; background: #00569c; color: #fff; font: 15px/28px "Open Sans", sans-serif; text-align: center; }
.dots { margin-left: 23px; }

/* application bar */
.appbar { display: flex; align-items: center; height: 60px; background: #1f57a4; border-bottom: 1px solid #dfe7f2; color: #fff; padding-left: 19px; white-space: nowrap; }
.brand { width: 327px; margin-left: 41px; letter-spacing: .1px; font-weight: 300; }
.brand b { font-weight: 600; letter-spacing: .16px; }
.rule { width: 1px; height: 30px; background: #fff; }
.doc { margin-left: 38px; color: #78a9ff; }
.docname { width: 202px; margin-left: 16px; letter-spacing: .2px; }
.docdown { margin-left: 23px; }
.count { display: block; width: 28px; height: 28px; margin-left: 535px; padding-left: 1px; border-radius: 50%; background: #fff; color: #3d5d94; font-weight: 300; line-height: 28px; letter-spacing: .3px; overflow: hidden; }
.search { display: flex; align-items: center; gap: 21px; width: 435px; height: 59px; margin-left: 18px; padding-left: 20px; background: #f4f4f4; color: #a0a0a0; }
.search span { padding-top: 2px; }
.userbar { display: flex; align-items: center; margin-left: 18px; }
.userbar svg + svg { margin-left: 37px; }
.avatar { display: flex; align-items: center; justify-content: center; width: 40px; height: 40px; margin-left: 30px; border-radius: 50%; background: #0f62fe; }

.banner { display: flex; align-items: center; height: 50px; padding-left: 21px; background: #1f57a4; color: #fff; white-space: nowrap; }
.banner b { width: 112px; margin: -2px 5px 0 21px; font-weight: 600; letter-spacing: .15px; }
.msg { letter-spacing: .025px; }
.dismiss { margin-left: auto; margin-right: 20px; }
.more { display: flex; align-items: center; justify-content: space-between; width: 175px; height: 50px; padding: 0 23px 0 20px; background: #333; }

/* toolbar */
.toolbar { display: flex; height: 51px; background: #fff; border-bottom: 1px solid #e6e6e6; font-weight: 300; }
.cell { display: flex; align-items: center; justify-content: center; border-right: 1px solid #e6e6e6; white-space: nowrap; }
.cell span { font-weight: 350; padding-top: 1px; }
.w60 { width: 61px; }
.w50 { width: 50px; }
.w51 { width: 51px; }
.save { width: 67px; gap: 18px; padding-left: 2px; }
.undo { width: 99px; gap: 31px; padding-left: 1px; }
.create { width: 117px; justify-content: flex-start; padding-left: 17px; gap: 15px; }
.create svg, .blue svg, .pager svg, .packed svg, .related svg, .compare svg { margin-top: 5px; }
.pager { width: 111px; gap: 18px; }
.pager .up { transform: rotate(180deg); }
.packed { width: 181px; justify-content: space-between; padding: 0 12px 0 22px; }
.related { width: 125px; justify-content: space-between; padding: 0 13px 0 22px; }
.compare { width: 136px; justify-content: space-between; padding: 0 12px 0 22px; }
.right { display: flex; margin-left: auto; border-left: 1px solid #e6e6e6; }
.right .cell { justify-content: space-between; }
.blue { color: #1f57a4; }
.analytics { width: 136px; padding: 0 16px; letter-spacing: .1px; }
.details { width: 119px; padding: 0 17px 0 16px; letter-spacing: .15px; }
.fields { width: 112px; padding: 0 17px 0 16px; background: #e8e8e8; border: 0; letter-spacing: .15px; }
.props { width: 145px; padding: 0 17px 0 16px; border: 0; letter-spacing: .1px; }

/* work area */
.work { display: flex; height: 770px; }
.rail { width: 60px; background: #e9e9e9; color: #1d3a6b; }
.rail div { display: flex; align-items: center; height: 60px; padding-left: 18px; }
.rail .on { background: #fff; border-left: 5px solid #1f57a4; padding-left: 15px; }
.cards { width: 343px; background: #fff; }
.cards h2 { height: 61px; padding: 20px 0 0 30px; font-size: 18px; font-weight: 600; color: #525252; letter-spacing: .2px; }
.cardlist { display: flex; height: 486px; overflow: hidden; }
.scroller { width: 322px; padding-top: 6px; }
.row { display: flex; align-items: flex-end; }
.no { width: 30px; padding: 0 9px 0 0; text-align: right; font-size: 15px; line-height: 24px; }
.row + .row { margin-top: 18px; }
.row:nth-child(2) { margin-top: 19px; }
.card { position: relative; width: 281px; height: 192px; border: 1px solid #e6e6e6; }
.card p { position: absolute; left: 12px; top: 10px; letter-spacing: .22px; white-space: nowrap; }
.card > svg { margin: -1px; }
.card.selected { width: 283px; height: 193px; margin-left: -1px; border-color: #333; }
.card.selected p { left: 14px; top: 11px; letter-spacing: .26px; }
.card p.q { letter-spacing: .3px; left: 12px; }
.card .tick { position: absolute; right: 22px; top: 22px; margin: 0; }
.rel { height: 191px; margin: 13px 0 0 30px; }
.vbar { display: flex; flex-direction: column; align-items: center; width: 21px; background: #f1f1f1; }
.thumb { width: 17px; background: #c1c1c1; }
.left .thumb { height: 113px; margin-top: 7px; }
.arr { border: 5px solid transparent; }
.arr.up { border-top: 0; border-bottom-color: #505050; margin-top: 9px; }
.arr.dim { border-bottom-color: #a3a3a3; }
.arr.dn { border-bottom: 0; border-top-color: #505050; margin: auto 0 9px; }
.splitter { display: flex; align-items: center; justify-content: center; width: 10px; background: #e9e9e9; }
.splitter i { width: 4px; height: 20px; margin-top: 2px; border: solid #333; border-width: 0 1px; }
.center { display: grid; grid-template: 761px 9px / 1087px 420px; }
.canvas { background: #f3f3f3; padding: 40px 0 0 60px; }
.viz { width: 967px; height: 661px; background: #fff; overflow: hidden; }
.viz h1 { display: flex; align-items: center; gap: 10px; height: 50px; padding-left: 22px; font-size: 20px; font-weight: 600; letter-spacing: .42px; color: #2b2b2b; }
.viz em { width: 30px; height: 22px; border-radius: 11px; background: #00884b; color: #fff; font: 300 15px/22px Roboto, sans-serif; text-align: center; letter-spacing: 0; }
.legends { display: flex; gap: 29px; height: 70px; padding: 2px 0 0 27px; color: #222; }
.legend { width: 137px; font-size: 15px; line-height: 18px; letter-spacing: .2px; white-space: nowrap; }
.legend > span { display: block; height: 24px; font-weight: 350; }
.ramp { display: grid; grid-template-columns: repeat(7, 1fr); height: 22px; }
.c1 { background: #e8daff; } .c2 { background: #c5a3ff; } .c3 { background: #a56eff; } .c4 { background: #8549e0; } .c5 { background: #6929c4; } .c6 { background: #491d8b; } .c7 { background: #31135e; }
.ends { display: flex; justify-content: space-between; font-size: 11px; line-height: 24px; color: #666; letter-spacing: -.2px; }
.lab { font-size: 12px; letter-spacing: -.2px; text-anchor: middle; fill: #fff; }
.lab .dark { fill: #222; }

.panel { background: #fff; overflow: hidden; }
.panel h2 { height: 73px; padding: 44px 0 0 20px; font-size: 25px; font-weight: 300; line-height: 26px; letter-spacing: .4px; }
.panelbody { display: flex; justify-content: space-between; height: 651px; padding: 0 20px; overflow: hidden; }
.slots { width: 339px; }
.head { display: flex; align-items: center; gap: 10px; height: 65px; padding-top: 21px; }
.head > svg { margin-top: -2px; }
.head.first { height: 29px; padding: 0 0 15px 0; }
.head.first > svg { margin-top: 2px; }
.head b { font-weight: 600; letter-spacing: .15px; }
.head u { text-decoration: none; color: #b5202a; }
.head small { margin-left: auto; font-size: 15.500px; }
.head span, .item span, .card p, .head small { font-weight: 350; }
.item { display: flex; align-items: center; height: 50px; padding: 0 28px 0 16px; background: #f3f3f3; }
.item span { margin: 0 auto 0 15px; }
.item .k { fill: #333; }
.drop { height: 52px; border: 1px dashed #6f6f6f; text-align: center; font-size: 15.500px; line-height: 48px; color: #8d8d8d; }
.item + .drop { margin-top: 10px; }
.vbar.rightbar { height: 651px; }
.rightbar .thumb { height: 410px; margin-top: 29px; }
.bottomsplit { grid-column: 1 / 3; display: flex; align-items: center; background: #e9e9e9; }
.bottomsplit i { width: 19px; height: 4px; margin-left: 743px; border: solid #444; border-width: 1px 0; }

/* taskbar */
.taskbar { position: relative; display: flex; align-items: center; height: 60px; border-top: 1px solid #3a3f42; background: linear-gradient(90deg, #1b2422 0, #1a2425 430px, #12282e 600px, #112651 750px, #1a2053 800px, #281d43 900px, #2a1b44 1000px, #2a165a 1100px, #291067 1200px, #300f55 1380px, #2b1448 1520px, #2a1a3c 1700px, #231c2e 1920px); color: #fff; font: 15px/20px "Open Sans", sans-serif; letter-spacing: -.3px; }
.weather { display: flex; gap: 8px; width: 446px; padding-left: 25px; align-items: center; }
.weather > svg { margin-top: -3px; }
.weather div, .clock, .lang { margin-top: -2px; }
.weather span { color: #c2c7c8; }
.apps { display: flex; align-items: center; }
.tsearch { display: flex; align-items: center; width: 275px; height: 40px; margin: 0 5px 0 17px; padding: 0 6px 0 14px; border-radius: 20px; background: rgba(255,255,255,.17); border: 1px solid rgba(255,255,255,.12); font-size: 17px; letter-spacing: -.4px; color: #e2e6e6; }
.tsearch span { margin: 0 auto 0 11px; }
.app { position: relative; display: flex; align-items: center; justify-content: center; width: 50px; height: 50px; margin-right: 5px; border-radius: 6px; }
.app.run::after { content: ""; position: absolute; bottom: 1px; width: 8px; height: 4px; border-radius: 2px; background: #9a8fa8; }
.app.chrome { background: rgba(255,255,255,.1); }
.app.chrome.run::after { width: 20px; background: #dc9ce3; }
.app.groove { background: #472829; }
.app.groove.run::after { background: #ff8f98; }
.pb, .wb { position: absolute; top: 4px; right: 4px; width: 20px; height: 20px; border-radius: 50%; background: #0b5596; font: 600 13px/20px "Open Sans", sans-serif; text-align: center; }
.wb { right: 4px; background: #dc9ce3; color: #111; font-weight: 400; font-size: 15px; }
.tray { display: flex; align-items: center; margin-left: auto; padding-right: 25px; }
.t2 { margin-left: 22px; }
.t3 { margin-left: 24px; }
.lang { width: 30px; margin-left: 26px; text-align: center; }
.t4 { margin-left: 22px; }
.t5 { margin-left: 10px; }
.t6 { margin-left: 9px; }
.clock { width: 86px; margin-left: 13px; text-align: right; letter-spacing: -.05px; }
.notif { width: 20px; height: 20px; margin-left: 9px; border-radius: 50%; background: #dc9ce3; color: #111; font: 13px/20px "Open Sans", sans-serif; text-align: center; }
```
